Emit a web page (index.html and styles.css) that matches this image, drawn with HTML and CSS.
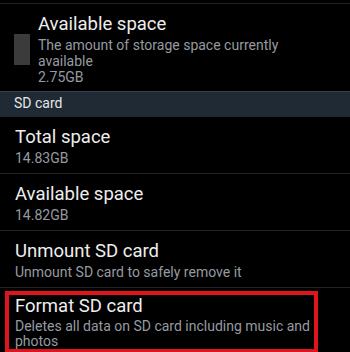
FILE: index.html
```html
<!DOCTYPE html>
<html>
<head>
  <title>Storage</title>
  <link rel="stylesheet" href="styles.css">
</head>
<body>
  <div class="list">
    <div class="top-rule"></div>

    <div class="item with-icon">
      <div class="icon"></div>
      <div class="text">
        <div class="title">Available space</div>
        <div class="summary">The amount of storage space currently<br>available<br>2.75GB</div>
      </div>
    </div>

    <div class="category">SD card</div>

    <div class="item">
      <div class="title">Total space</div>
      <div class="summary">14.83GB</div>
    </div>

    <div class="item">
      <div class="title">Available space</div>
      <div class="summary">14.82GB</div>
    </div>

    <div class="item">
      <div class="title">Unmount SD card</div>
      <div class="summary">Unmount SD card to safely remove it</div>
    </div>

    <div class="item highlight">
      <div class="title">Format SD card</div>
      <div class="summary">Deletes all data on SD card including music and photos</div>
    </div>
  </div>
</body>
</html>
```

FILE: styles.css
```css
body {
  margin: 0;
  background-color: #000;
  font-family: Roboto, "Liberation Sans", sans-serif;
  overflow: hidden;
}

.list {
  width: 350px;
}

.top-rule {
  margin-top: 3px;
  height: 1px;
  background-color: #222;
}

.item {
  padding: 9px 15px 7px 15px;
  border-bottom: 1px solid #242424;
}

.item.with-icon {
  display: flex;
  align-items: center;
  padding-left: 14px;
  border-bottom: none;
}

.icon {
  width: 16px;
  height: 31px;
  background-color: #3b3b3b;
  margin-right: 8px;
}

.title {
  font-size: 18.5px;
  line-height: 22px;
  color: #eeeeee;
}

.summary {
  margin-top: 2px;
  font-size: 14px;
  line-height: 16px;
  color: #959ba1;
}

.category {
  height: 23px;
  padding: 0 14px 2px 14px;
  line-height: 23px;
  font-size: 14px;
  color: #e6e6e6;
  background-color: #1f2a35;
  border-top: 1px solid #34404b;
  margin-top: -1px;
}

.item.highlight {
  width: 299px;
  margin: 3px 0 0 5px;
  padding: 0 0 0 6px;
  border: 4px solid #e0141c;
}

.item.highlight .summary {
  line-height: 15px;
}
```
